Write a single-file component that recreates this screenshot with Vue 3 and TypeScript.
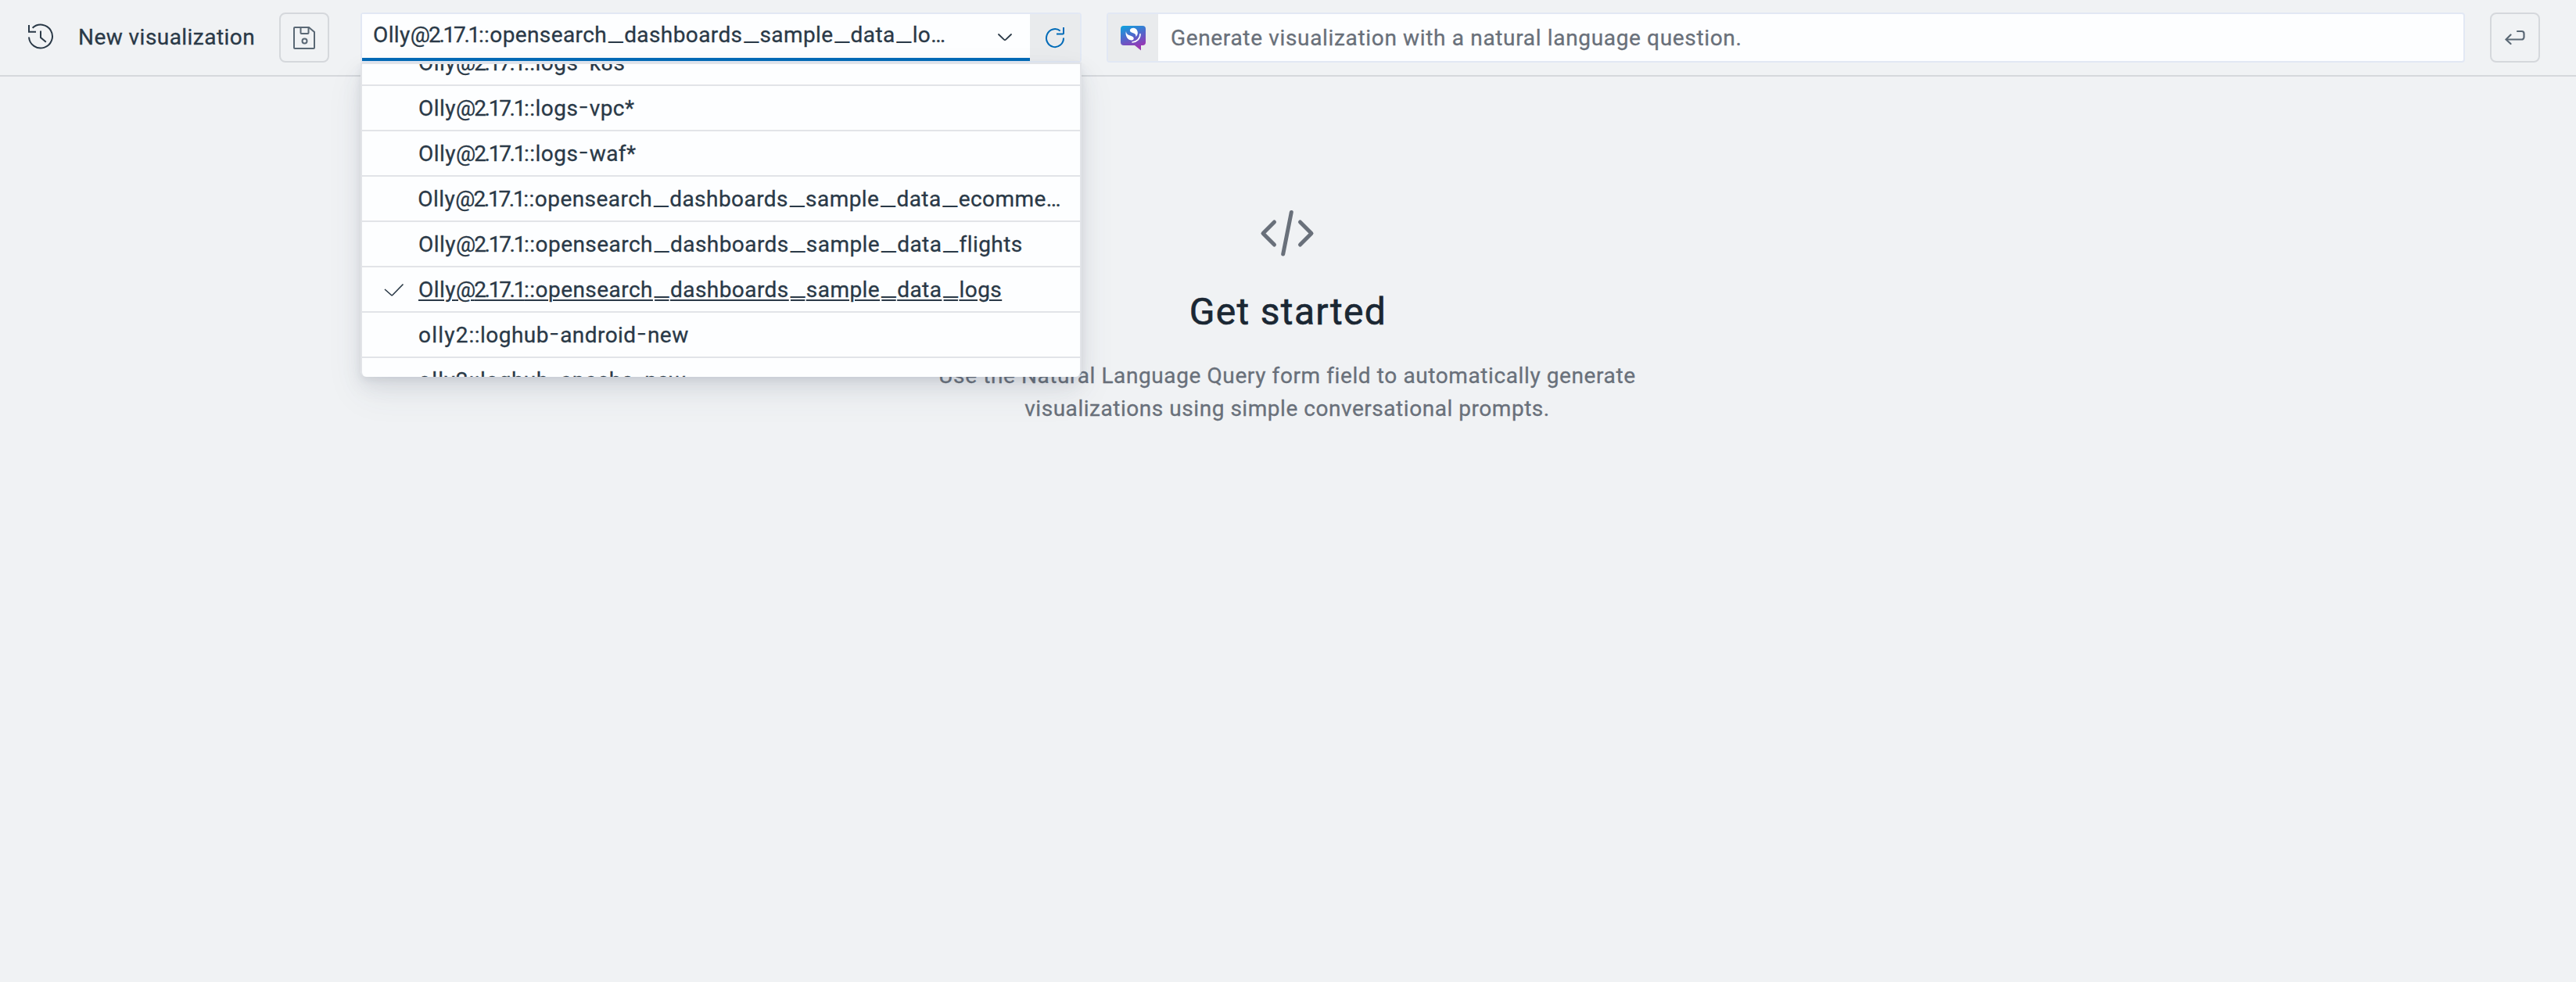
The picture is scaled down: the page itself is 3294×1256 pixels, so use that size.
<script setup lang="ts">
import { ref } from 'vue'

interface Segment {
  text: string
  kind: string
}

interface Option {
  label: string
  checked?: boolean
}

const selected = ref('Olly@2.17.1::opensearch_dashboards_sample_data_lo…')

const options = ref<Option[]>([
  { label: 'Olly@2.17.1::logs-k8s' },
  { label: 'Olly@2.17.1::logs-vpc*' },
  { label: 'Olly@2.17.1::logs-waf*' },
  { label: 'Olly@2.17.1::opensearch_dashboards_sample_data_ecomme…' },
  { label: 'Olly@2.17.1::opensearch_dashboards_sample_data_flights' },
  { label: 'Olly@2.17.1::opensearch_dashboards_sample_data_logs', checked: true },
  { label: 'olly2::loghub-android-new' },
  { label: 'olly2::loghub-apache-new' },
])

// Splits an index name so version numbers, underscores and hyphens can be spaced on their own.
function segments(label: string): Segment[] {
  const parts = label.match(/@|2\.17\.1|_|-|olly2|[^@_\-.]+?(?=@|_|-|$)|./g) ?? []
  return parts.map((text) => {
    if (text === '@') return { text, kind: 'at' }
    if (text === '2.17.1') return { text, kind: 'version' }
    if (text === '_') return { text, kind: 'underscore' }
    if (text === '-') return { text, kind: 'hyphen' }
    if (text === 'olly2') return { text, kind: 'cluster' }
    return { text, kind: 'plain' }
  })
}
</script>

<template>
  <div class="page">
    <header class="toolbar">
      <svg class="history" width="36" height="36" viewBox="0 0 36 36" fill="none" stroke="#2a3947" stroke-width="2">
        <path d="M3 17.500a15 15 0 1 0 4.600-11.800" />
        <path d="M3 2v8.800h9" />
        <path d="M18 9.500v8.500l6.800 5.700" />
      </svg>
      <span class="name">New visualization</span>
      <button class="square save" aria-label="Save">
        <svg width="32" height="32" viewBox="0 0 32 32" fill="none" stroke="#5a6875" stroke-width="2">
          <path d="M4 3h18l7 6v20a1 1 0 0 1-1 1H4a1 1 0 0 1-1-1V4a1 1 0 0 1 1-1z" />
          <path d="M11.500 3v7a1 1 0 0 0 1 1h8a1 1 0 0 0 1-1V3" />
          <circle cx="16.500" cy="20.500" r="3" />
        </svg>
      </button>

      <div class="combo">
        <div class="field">
          <span class="value"><span v-for="(s, i) in segments(selected)" :key="i" :class="s.kind">{{ s.text }}</span></span>
          <svg class="chevron" width="20" height="12" viewBox="0 0 20 12" fill="none" stroke="#2a3947" stroke-width="1.800" stroke-linecap="round">
            <path d="M2 2l6.900 6.700a1.600 1.600 0 0 0 2.200 0L18 2" />
          </svg>
        </div>
        <button class="refresh" aria-label="Refresh">
          <svg width="28" height="28" viewBox="0 0 28 28" fill="none" stroke="#006bb8" stroke-width="2">
            <path d="M25 14.500A11 11.500 0 1 1 20.700 5.500" />
            <path d="M25 1v7.500a1 1 0 0 1-1 1h-8" />
          </svg>
        </button>
        <div class="menu">
          <div class="list">
            <div v-for="o in options" :key="o.label" class="option">
              <span class="mark">
                <svg v-if="o.checked" width="26" height="18" viewBox="0 0 26 18" fill="none" stroke="#2a3947" stroke-width="1.600">
                  <path d="M1 8l8.500 7.500a1 1 0 0 0 1.300 0L24.500 1.500" />
                </svg>
              </span>
              <span class="label" :class="{ current: o.checked }"><span v-for="(s, i) in segments(o.label)" :key="i" :class="s.kind">{{ s.text }}</span></span>
            </div>
          </div>
        </div>
      </div>

      <div class="prompt">
        <span class="assistant">
          <svg width="32" height="32" viewBox="0 0 32 32">
            <defs>
              <linearGradient id="bubble" x1="0" y1="0" x2="0.35" y2="1">
                <stop offset="0" stop-color="#0aa5df" />
                <stop offset="0.500" stop-color="#5068cc" />
                <stop offset="1" stop-color="#9b35b3" />
              </linearGradient>
            </defs>
            <path d="M4 0h24a4 4 0 0 1 4 4v17a4 4 0 0 1-4 4h-2v6.500L18 25H4a4 4 0 0 1-4-4V4a4 4 0 0 1 4-4z" fill="url(#bubble)" />
            <path d="M12 5c2-3.200 8-3 9.500 2 1 3.500-.5 5.500-2 7 0-3-1-3.800-3.500-4.700-2.500-.9-4.700-2-4-4.300z" fill="#fff" />
            <path d="M7 7c0 3 1.500 4.200 4.500 5.200 4 1.200 6 2.600 5 5-1 1.800-5 1.600-7-.5C7 14.200 5.800 10 7 7z" fill="#fff" />
            <path d="M25 10.500c0 6-4.500 10-10 10.500" fill="none" stroke="#fff" stroke-width="1.600" stroke-linecap="round" />
          </svg>
        </span>
        <span class="question">Generate visualization with a natural language question.</span>
      </div>

      <button class="square submit" aria-label="Submit">
        <svg width="26" height="20" viewBox="0 0 26 20" fill="none" stroke="#5a6875" stroke-width="2.200" stroke-linecap="round">
          <path d="M16 2h5.500a3 3 0 0 1 3 3v4.500a3 3 0 0 1-3 3H2.500" />
          <path d="M7.500 6.500L1.500 12.500l6 5.500" />
        </svg>
      </button>
    </header>

    <main class="empty">
      <svg class="code" width="70" height="60" viewBox="0 0 70 60" fill="none" stroke="#69707a" stroke-width="5" stroke-linecap="round" stroke-linejoin="round">
        <path d="M18.500 16L4 30.500 18.500 45" />
        <path d="M51.500 16L66 30.500 51.500 45" />
        <path d="M40.300 3.500L29.700 57" />
      </svg>
      <h1>Get started</h1>
      <p>Use the Natural Language Query form field to automatically generate<br /><span class="tail">visualizations using simple conversational prompts.</span></p>
    </main>
  </div>
</template>

<style>
html,
body {
  margin: 0;
  background: #f0f2f4;
}
</style>

<style scoped>
.page {
  box-sizing: border-box;
  height: 1256px;
  overflow: hidden;
  background: #f0f2f4;
  color: #2a3947;
  font: 400 28px/42px Roboto, 'Liberation Sans', sans-serif;
  letter-spacing: 0.45px;
  -webkit-text-stroke: 0.3px currentColor;
}

.toolbar {
  box-sizing: border-box;
  display: flex;
  height: 98px;
  padding: 16px 46px 0 34px;
  border-bottom: 2px solid #d5d8dc;
}

.history {
  flex: none;
  margin-top: 14px;
}

.name {
  width: 222px;
  margin: 11px 0 0 30px;
  padding-right: 35px;
  white-space: nowrap;
}

.square {
  box-sizing: border-box;
  display: flex;
  flex: none;
  align-items: center;
  justify-content: center;
  width: 64px;
  height: 64px;
  padding: 0;
  border: 2px solid #d5d8dc;
  border-radius: 8px;
  background: transparent;
}

.combo {
  position: relative;
  z-index: 2;
  box-sizing: border-box;
  display: flex;
  flex: none;
  width: 922px;
  height: 64px;
  margin-left: 40px;
  border: 2px solid #e2e8f4;
  border-radius: 4px;
}

.field {
  box-sizing: border-box;
  display: flex;
  justify-content: space-between;
  width: 854px;
  height: 60px;
  padding: 6px 22px 0 14px;
  border-bottom: 4px solid #006bb8;
  background: #fdfeff;
}

.value {
  letter-spacing: 0.400px;
  white-space: nowrap;
}

.chevron {
  margin-top: 18px;
}

.refresh {
  display: flex;
  align-items: center;
  justify-content: center;
  width: 64px;
  height: 60px;
  padding: 0;
  border: 0;
  background: #e9ebed;
}

.menu {
  position: absolute;
  top: 62px;
  left: -2px;
  box-sizing: border-box;
  width: 922px;
  height: 402px;
  border: 2px solid #e2e4e8;
  border-bottom-width: 0;
  border-radius: 0 0 8px 8px;
  box-shadow: 0 12px 24px rgba(65, 78, 101, 0.1), 0 20px 48px rgba(65, 78, 101, 0.08), 0 4px 8px rgba(65, 78, 101, 0.08);
}

.list {
  display: flex;
  flex-direction: column;
  justify-content: flex-start;
  height: 400px;
  overflow: hidden;
  border-radius: 0 0 6px 6px;
  background: #fdfeff;
}

.option {
  box-sizing: border-box;
  display: flex;
  flex: none;
  height: 58px;
  padding: 8px 24px 0 28px;
  border-bottom: 2px solid #e2e4e8;
}

.option:first-child {
  margin-top: -30px;
}

.mark {
  width: 44px;
}

.mark svg {
  display: block;
  margin-top: 12px;
}

.label {
  white-space: nowrap;
}

.current {
  text-decoration: underline;
  text-decoration-thickness: 2px;
  text-underline-offset: 3px;
}

.at {
  letter-spacing: -1.900px;
}

.version {
  letter-spacing: -2.300px;
}

.cluster {
  letter-spacing: 1.200px;
}

.underscore {
  padding: 0 1.500px 0 2.200px;
  font-family: 'Liberation Sans', sans-serif;
  font-size: 33px;
  line-height: 0;
  letter-spacing: 0;
  vertical-align: 6px;
  text-decoration-skip-ink: none;
  -webkit-text-stroke-width: 0;
}

.hyphen {
  padding: 0 1.500px;
  font-size: 38px;
  font-weight: 300;
  line-height: 0;
  vertical-align: -1px;
}

.prompt {
  box-sizing: border-box;
  display: flex;
  flex: none;
  width: 1737px;
  height: 64px;
  margin-left: 32px;
  border: 2px solid #e2e8f4;
  border-radius: 4px;
  background: #fdfeff;
}

.assistant {
  box-sizing: border-box;
  width: 64px;
  padding: 15px 16px 0;
  background: #e9ebed;
}

.assistant svg {
  display: block;
}

.question {
  padding: 10px 0 0 16px;
  color: #69707a;
  letter-spacing: 0.660px;
}

.submit {
  margin-left: 32px;
}

.empty {
  display: flex;
  flex-direction: column;
  align-items: center;
  padding-top: 170px;
  color: #69707a;
  text-align: center;
}

.code {
  margin-right: 2px;
}

h1 {
  margin: 41px 0 0;
  color: #1a2733;
  font-size: 48px;
  font-weight: 400;
  line-height: 60px;
  letter-spacing: 1.300px;
  -webkit-text-stroke-width: 0.6px;
}

p {
  margin: 31px 2px 0 0;
  letter-spacing: 0.600px;
}

.tail {
  letter-spacing: 0.540px;
}
</style>
